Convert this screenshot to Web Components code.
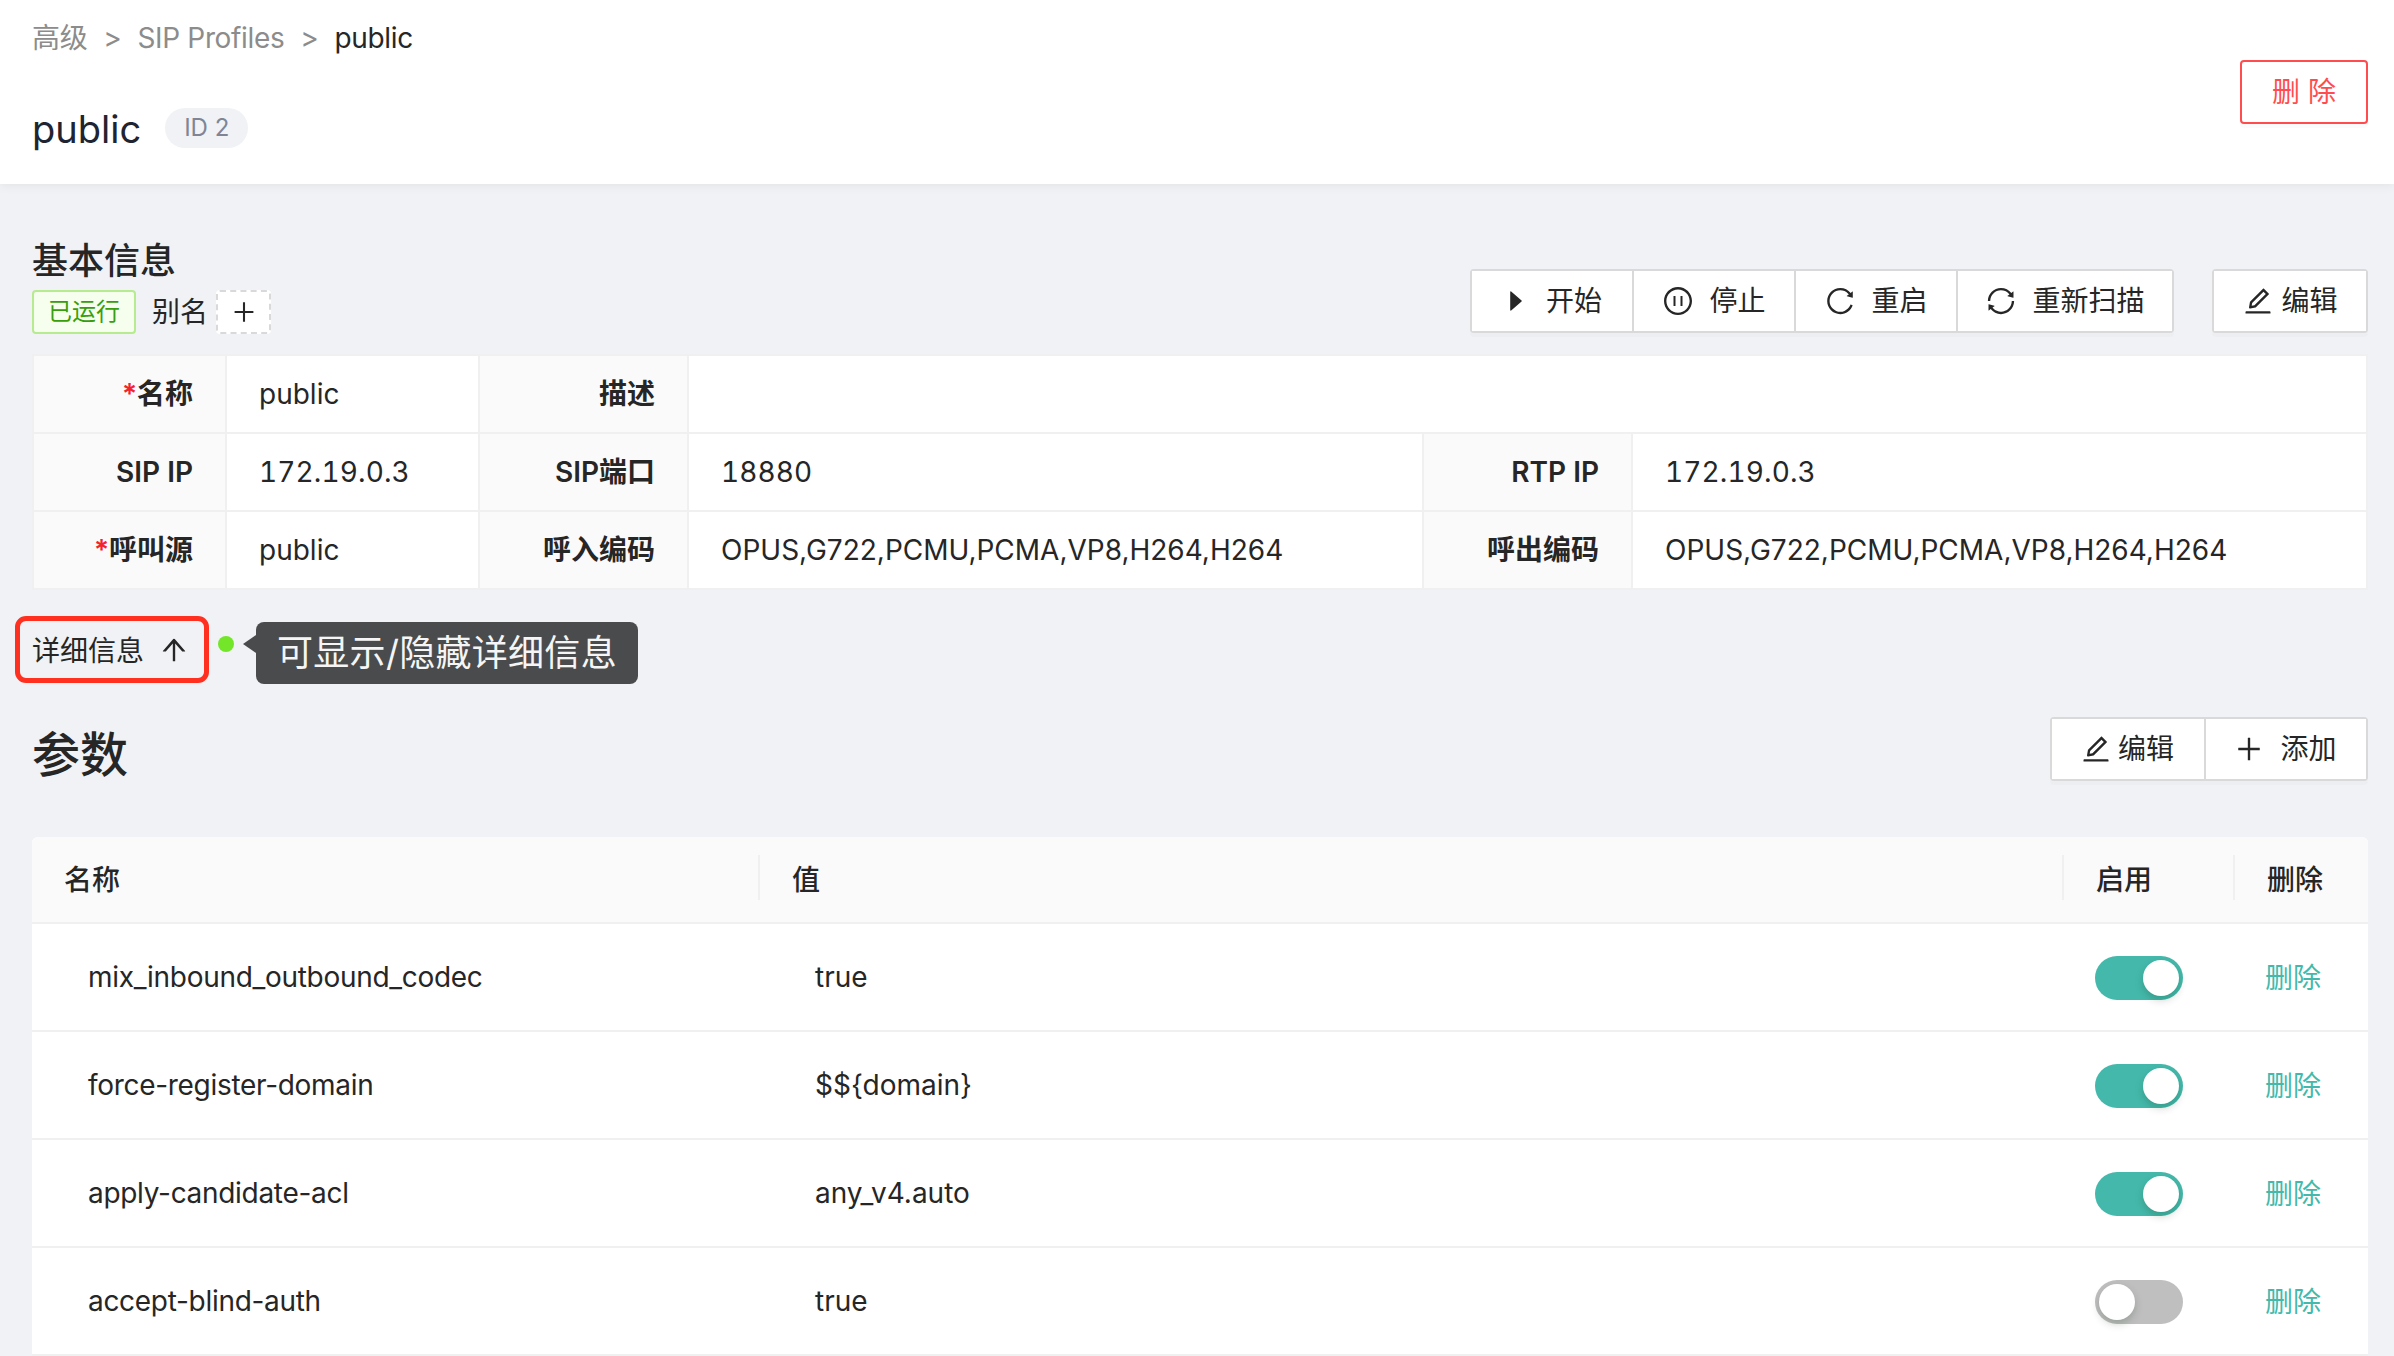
<!DOCTYPE html>
<html lang="zh-CN">
<head>
<meta charset="utf-8">
<title>public</title>
<style>
  html, body { margin: 0; height: 100%; background: #f0f2f5; overflow: hidden; }
  body { font: 28px/1.5 Inter, "Noto Sans CJK SC", sans-serif; color: #262626; }
</style>
</head>
<body>
<x-page>
  <x-page-header slot="header">
    <x-crumb slot="crumbs">高级</x-crumb>
    <x-crumb slot="crumbs">SIP Profiles</x-crumb>
    <x-crumb slot="crumbs" current>public</x-crumb>
    <span slot="title">public</span>
    <span slot="badge">ID 2</span>
    <x-btn slot="action" danger style="--w:128px">删 除</x-btn>
  </x-page-header>

  <x-section-head>
    <span slot="title">基本信息</span>
    <x-tag slot="meta">已运行</x-tag>
    <span slot="meta" style="margin-left:16px">别名</span>
    <x-add-tag slot="meta"></x-add-tag>
    <x-btn-group slot="tools">
      <x-btn style="--w:160px"><x-icon name="caret" size="28" slot="icon"></x-icon><span style="margin-left:16px">开始</span></x-btn>
      <x-btn style="--w:160px"><x-icon name="pause" size="32" slot="icon"></x-icon><span style="margin-left:15px">停止</span></x-btn>
      <x-btn style="--w:160px"><x-icon name="reload" size="32" slot="icon"></x-icon><span style="margin-left:15px">重启</span></x-btn>
      <x-btn style="--w:214px"><x-icon name="sync" size="32" slot="icon"></x-icon><span style="margin-left:15px">重新扫描</span></x-btn>
    </x-btn-group>
    <x-btn-group slot="tools" style="margin-left:38px">
      <x-btn style="--w:152px"><x-icon name="edit" size="32" slot="icon"></x-icon><span style="margin-left:7px">编辑</span></x-btn>
    </x-btn-group>
  </x-section-head>

  <x-desc>
    <x-desc-label required>名称</x-desc-label><x-desc-value>public</x-desc-value>
    <x-desc-label>描述</x-desc-label><x-desc-value style="grid-column:span 3"></x-desc-value>
    <x-desc-label>SIP IP</x-desc-label><x-desc-value num>172.19.0.3</x-desc-value>
    <x-desc-label>SIP端口</x-desc-label><x-desc-value num>18880</x-desc-value>
    <x-desc-label>RTP IP</x-desc-label><x-desc-value num>172.19.0.3</x-desc-value>
    <x-desc-label required>呼叫源</x-desc-label><x-desc-value>public</x-desc-value>
    <x-desc-label>呼入编码</x-desc-label><x-desc-value>OPUS,G722,PCMU,PCMA,VP8,H264,H264</x-desc-value>
    <x-desc-label>呼出编码</x-desc-label><x-desc-value>OPUS,G722,PCMU,PCMA,VP8,H264,H264</x-desc-value>
  </x-desc>

  <x-details-toggle tip="可显示/隐藏详细信息">详细信息</x-details-toggle>

  <x-params-head>
    <span slot="title">参数</span>
    <x-btn-group slot="tools">
      <x-btn style="--w:152px"><x-icon name="edit" size="32" slot="icon"></x-icon><span style="margin:0 2px 0 6px">编辑</span></x-btn>
      <x-btn style="--w:160px"><x-icon name="plus" size="32" slot="icon"></x-icon><span style="margin:0 2px 0 15px">添加</span></x-btn>
    </x-btn-group>
  </x-params-head>

  <x-param-table>
    <x-param-row name="mix_inbound_outbound_codec" value="true" on></x-param-row>
    <x-param-row name="force-register-domain" value="$${domain}" on></x-param-row>
    <x-param-row name="apply-candidate-acl" value="any_v4.auto" on></x-param-row>
    <x-param-row name="accept-blind-auth" value="true"></x-param-row>
  </x-param-table>
</x-page>

<script>
const ICONS = {
  caret: 'M715.8 493.5L335 165.1c-14.2-12.2-35-1.2-35 18.5v656.8c0 19.7 20.8 30.7 35 18.5l380.8-328.4c10.9-9.4 10.9-27.6 0-37z',
  pause: 'M512 64C264.6 64 64 264.6 64 512s200.6 448 448 448 448-200.6 448-448S759.4 64 512 64zm0 820c-205.4 0-372-166.6-372-372s166.6-372 372-372 372 166.6 372 372-166.6 372-372 372zm-88-532h-48c-4.4 0-8 3.6-8 8v304c0 4.4 3.6 8 8 8h48c4.4 0 8-3.6 8-8V360c0-4.4-3.6-8-8-8zm224 0h-48c-4.4 0-8 3.6-8 8v304c0 4.4 3.6 8 8 8h48c4.4 0 8-3.6 8-8V360c0-4.4-3.6-8-8-8z',
  reload: 'M909.1 209.3l-56.4 44.1C775.8 155.1 656.2 92 521.9 92 290 92 102.3 279.5 102 511.5 101.7 743.7 289.8 932 521.9 932c181.3 0 335.8-115 394.6-276.1 1.5-4.2-.7-8.9-4.9-10.3l-56.7-19.5a8 8 0 00-10.1 4.8c-1.8 5-3.8 10-5.9 14.9-17.3 41-42.1 77.8-73.7 109.4A344.77 344.77 0 01655.9 829c-42.3 17.9-87.4 27-133.8 27-46.5 0-91.5-9.1-133.8-27A341.5 341.5 0 01279 755.2a342.16 342.16 0 01-73.7-109.4c-17.9-42.4-27-87.4-27-133.9s9.1-91.5 27-133.9c17.3-41 42.1-77.8 73.7-109.4 31.6-31.6 68.4-56.4 109.3-73.8 42.3-17.9 87.4-27 133.8-27 46.5 0 91.5 9.1 133.8 27a341.5 341.5 0 01109.3 73.8c9.9 9.9 19.2 20.4 27.8 31.4l-60.2 47a8 8 0 003 14.1l175.6 43c5 1.2 9.9-2.6 9.9-7.7l.8-180.9c-.1-6.6-7.8-10.3-13-6.2z',
  sync: 'M168 504.2c1-43.7 10-86.1 26.9-126 17.3-41 42.1-77.7 73.7-109.4S337 212.3 378 195c42.4-17.9 87.4-27 133.9-27s91.5 9.1 133.8 27A341.5 341.5 0 01755 268.8c9.9 9.9 19.2 20.4 27.8 31.4l-60.2 47a8 8 0 003 14.1l175.7 43c5 1.2 9.9-2.6 9.9-7.7l.8-180.9c0-6.7-7.7-10.5-12.9-6.3l-56.4 44.1C765.8 155.1 646.2 92 511.8 92 282.7 92 96.3 275.6 92 503.8a8 8 0 008 8.2h60c4.4 0 7.9-3.5 8-7.8zm756 7.8h-60c-4.4 0-7.9 3.5-8 7.8-1 43.7-10 86.1-26.9 126-17.3 41-42.1 77.8-73.7 109.4A342.45 342.45 0 01512.1 856a342.24 342.24 0 01-243.2-100.8c-9.9-9.9-19.2-20.4-27.8-31.4l60.2-47a8 8 0 00-3-14.1l-175.7-43c-5-1.2-9.9 2.6-9.9 7.7l-.7 181c0 6.7 7.7 10.5 12.9 6.3l56.4-44.1C258.2 868.9 377.8 932 512.2 932c229.2 0 415.5-183.7 419.8-411.8a8 8 0 00-8-8.2z',
  edit: 'M257.7 752c2 0 4-.2 6-.5L431.9 722c2-.4 3.9-1.3 5.3-2.8l423.9-423.9a9.96 9.96 0 000-14.1L694.9 114.9c-1.9-1.9-4.4-2.9-7.1-2.9s-5.2 1-7.1 2.9L256.8 538.8c-1.5 1.5-2.4 3.3-2.8 5.3l-29.5 168.2a33.5 33.5 0 009.4 29.8c6.6 6.4 14.9 9.9 23.8 9.9zm67.4-174.4L687.8 215l73.3 73.3-362.7 362.6-88.9 15.7 15.6-89zM880 836H144c-17.7 0-32 14.3-32 32v36c0 4.4 3.6 8 8 8h784c4.4 0 8-3.6 8-8v-36c0-17.7-14.3-32-32-32z',
  plus: 'M482 152h60q8 0 8 8v704q0 8-8 8h-60q-8 0-8-8V160q0-8 8-8zM176 474h672q8 0 8 8v60q0 8-8 8H176q-8 0-8-8v-60q0-8 8-8z',
  up: 'M868 545.5L536.1 163a31.96 31.96 0 00-48.3 0L156 545.5a7.97 7.97 0 006 13.2h81c4.6 0 9-2 12.1-5.5L474 300.9V864c0 4.4 3.6 8 8 8h60c4.4 0 8-3.6 8-8V300.9l218.9 252.3c3 3.5 7.4 5.5 12.1 5.5h81c6.8 0 10.5-8 6-13.2z'
};
function def(tag, css, html) {
  customElements.define(tag, class extends HTMLElement {
    constructor() {
      super();
      this.attachShadow({ mode: 'open' });
      this._css = css; this._html = html;
    }
    connectedCallback() {
      const h = typeof this._html === 'function' ? this._html(this) : this._html;
      this.shadowRoot.innerHTML = '<style>' + this._css + '</style>' + h;
    }
  });
}

def('x-page', `
  :host { display: block; height: 1356px; overflow: hidden; }
  main { display: block; padding: 0 26px 0 32px; }
`, `<slot name="header"></slot><main><slot></slot></main>`);

def('x-icon', `:host { display: inline-flex; flex: none; } svg { display: block; fill: currentColor; }`, el => {
  const s = el.getAttribute('size') || 28;
  return `<svg width="${s}" height="${s}" viewBox="0 0 1024 1024" aria-hidden="true"><path d="${ICONS[el.getAttribute('name')]}"/></svg>`;
});

def('x-crumb', `
  :host { display: inline-flex; align-items: center; color: #8c8c8c; letter-spacing: -.35px; }
  :host([current]) { color: #262626; }
  :host(:not(:first-child))::before { content: ">"; color: #8c8c8c; margin: 0 16px; }
`, `<slot></slot>`);

def('x-page-header', `
  :host { display: flex; justify-content: space-between; box-sizing: border-box; height: 184px; padding: 16px 26px 0 32px; background: #fff; box-shadow: 0 2px 10px rgba(0,0,0,.06); position: relative; }
  .crumbs { display: flex; line-height: 44px; height: 44px; }
  .title { display: flex; align-items: center; height: 84px; margin-top: 27px; }
  .name { font-size: 38px; line-height: 44px; color: #1f2430; }
  .badge { margin: -2px 0 0 24px; height: 40px; line-height: 40px; padding: 0 19px; border-radius: 20px; background: #f0f2f5; color: #7f8595; font-size: 24px; }
  .action { margin-top: 44px; }
`, `<div><div class="crumbs"><slot name="crumbs"></slot></div>
  <div class="title"><span class="name"><slot name="title"></slot></span><span class="badge"><slot name="badge"></slot></span></div></div>
  <div class="action"><slot name="action"></slot></div>`);

def('x-btn', `
  :host { display: inline-flex; box-sizing: border-box; align-items: center; justify-content: center; height: 60px; width: var(--w, auto); background: #fff; color: #262626; white-space: nowrap; }
  :host([danger]) { height: 64px; border: 2px solid #ff4d4f; border-radius: 4px; color: #ff4d4f; box-shadow: 0 4px 0 rgba(0,0,0,.015); }
  :host(:not(:first-child):not([danger])) { border-left: 2px solid #d9d9d9; box-sizing: content-box; }
`, `<slot name="icon"></slot><slot></slot>`);

def('x-btn-group', `
  :host { display: inline-flex; border: 2px solid #d9d9d9; border-radius: 4px; background: #fff; box-shadow: 0 4px 0 rgba(0,0,0,.015); }
`, `<slot></slot>`);

def('x-tag', `
  :host { display: inline-flex; box-sizing: border-box; align-items: center; justify-content: center; width: 104px; height: 44px; border: 2px solid #b7eb8f; border-radius: 4px; background: #f6ffed; color: #389e0d; font-size: 24px; }
`, `<slot></slot>`);

def('x-add-tag', `
  :host { display: inline-flex; box-sizing: border-box; align-items: center; justify-content: center; width: 55px; height: 44px; margin-left: 8px; border: 2px dashed #d9d9d9; border-radius: 4px; background: #fff; color: #262626; }
`, `<x-icon name="plus" size="28"></x-icon>`);

def('x-section-head', `
  :host { display: flex; justify-content: space-between; align-items: flex-end; margin-top: 51px; }
  .title { font-size: 36px; line-height: 52px; font-weight: 500; color: #262626; height: 55px; }
  .meta { display: flex; align-items: center; height: 44px; }
  .tools { display: flex; margin-bottom: 1px; }
`, `<div><div class="title"><slot name="title"></slot></div><div class="meta"><slot name="meta"></slot></div></div>
  <div class="tools"><slot name="tools"></slot></div>`);

def('x-desc', `
  :host { display: grid; grid-template-columns: 191px 251px 207px 733px 207px 733px; grid-auto-rows: 76px; gap: 2px; padding: 2px; margin-top: 20px; background: #f0f0f0; }
`, `<slot></slot>`);

def('x-desc-label', `
  :host { display: flex; align-items: center; justify-content: flex-end; padding-right: 32px; background: #fafafa; font-weight: 600; color: #262626; }
  :host([required])::before { content: "*"; color: #f5222d; }
`, `<slot></slot>`);

def('x-desc-value', `
  :host { display: flex; align-items: center; padding-left: 32px; background: #fff; color: #262626; }
  :host([num]) { font-variant-numeric: tabular-nums; letter-spacing: .12px; }
`, `<slot></slot>`);

def('x-details-toggle', `
  :host { display: flex; align-items: flex-start; margin: 26px 0 0 -17px; height: 69px; }
  .box { display: flex; align-items: center; box-sizing: border-box; width: 194px; height: 67px; padding: 2px 0 0 12px; border: 5px solid #ff3020; border-radius: 11px; }
  .arrow { margin: -2px 0 0 14px; }
  .dot { width: 16px; height: 16px; border-radius: 50%; background: #73e62a; margin: 20px 0 0 9px; flex: none; }
  .tip { position: relative; box-sizing: border-box; width: 382px; height: 62px; margin: 6px 0 0 22px; padding: 0 0 0 21px; line-height: 62px; background: #4a4b4d; border-radius: 8px; color: #f5f5f5; font-size: 36px; letter-spacing: .3px; white-space: nowrap; }
  .tip::before { content: ""; position: absolute; left: -13px; top: 13px; border: 9px solid transparent; border-left: 0; border-right: 13px solid #4a4b4d; }
`, el => `<div class="box"><slot></slot><x-icon class="arrow" name="up" size="32"></x-icon></div><span class="dot"></span><span class="tip">${el.getAttribute('tip')}</span>`);

def('x-params-head', `
  :host { display: flex; justify-content: space-between; align-items: flex-start; height: 64px; margin-top: 32px; }
  .title { font-size: 48px; font-weight: 500; line-height: 76px; color: #262626; }
`, `<div class="title"><slot name="title"></slot></div><slot name="tools"></slot>`);

const COLS = '726px 1304px 171px 135px';
def('x-param-table', `
  :host { display: block; margin-top: 56px; background: #fff; border-radius: 6px 6px 0 0; overflow: hidden; }
  .head { display: grid; grid-template-columns: ${COLS}; box-sizing: border-box; height: 87px; align-items: center; background: #fafafa; border-bottom: 2px solid #f0f0f0; font-weight: 500; }
  .head div { position: relative; padding-left: 32px; }
  .head div + div { padding-left: 34px; }
  .head div + div::before { content: ""; position: absolute; left: 0; top: -4px; height: 45px; width: 2px; background: #f0f0f0; }
`, `<div class="head"><div>名称</div><div>值</div><div>启用</div><div>删除</div></div><slot></slot>`);

def('x-switch', `
  :host { display: inline-flex; box-sizing: border-box; width: 88px; height: 44px; padding: 4px; border-radius: 22px; background: #bfbfbf; }
  :host([on]) { background: #44b9ab; justify-content: flex-end; }
  i { display: block; width: 36px; height: 36px; border-radius: 50%; background: #fff; box-shadow: 0 4px 8px rgba(0,35,11,.2); }
`, `<i></i>`);

def('x-param-row', `
  :host { display: grid; grid-template-columns: ${COLS}; box-sizing: border-box; height: 108px; align-items: center; background: #fff; border-bottom: 2px solid #f0f0f0; }
  .name { padding-left: 56px; letter-spacing: -.3px; }
  .val { padding-left: 57px; }
  .sw { padding: 2px 0 0 33px; display: flex; }
  .del { padding: 2px 0 0 32px; color: #44b9ab; }
`, el => `<div class="name">${el.getAttribute('name')}</div><div class="val">${el.getAttribute('value')}</div>
  <div class="sw"><x-switch ${el.hasAttribute('on') ? 'on' : ''}></x-switch></div><div class="del">删除</div>`);
</script>
</body>
</html>
